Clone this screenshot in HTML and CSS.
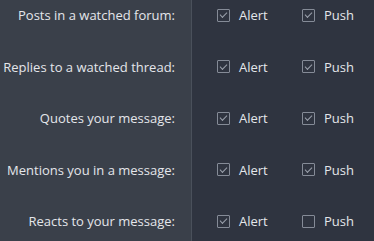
FILE: index.html
```html
<!DOCTYPE html>
<html>
<head>
<meta charset="utf-8">
<link rel="stylesheet" href="styles.css">
</head>
<body>
<div class="panel">
  <div class="labels">
    <div class="label">Posts in a watched forum:</div>
    <div class="label">Replies to a watched thread:</div>
    <div class="label">Quotes your message:</div>
    <div class="label">Mentions you in a message:</div>
    <div class="label">Reacts to your message:</div>
  </div>
  <div class="options">
    <div class="opt-row">
      <span class="opt"><span class="box checked"></span>Alert</span>
      <span class="opt"><span class="box checked"></span>Push</span>
    </div>
    <div class="opt-row">
      <span class="opt"><span class="box checked"></span>Alert</span>
      <span class="opt"><span class="box checked"></span>Push</span>
    </div>
    <div class="opt-row">
      <span class="opt"><span class="box checked"></span>Alert</span>
      <span class="opt"><span class="box checked"></span>Push</span>
    </div>
    <div class="opt-row">
      <span class="opt"><span class="box checked"></span>Alert</span>
      <span class="opt"><span class="box checked"></span>Push</span>
    </div>
    <div class="opt-row">
      <span class="opt"><span class="box checked"></span>Alert</span>
      <span class="opt"><span class="box"></span>Push</span>
    </div>
  </div>
</div>
</body>
</html>
```
FILE: styles.css
```css
html, body {
  margin: 0;
  padding: 0;
  background: #2f3440;
}
body {
  width: 374px;
  height: 241px;
  overflow: hidden;
  font-family: "Open Sans", "Noto Sans", sans-serif;
  font-size: 13px;
  color: #e4e6ea;
}
.panel {
  display: grid;
  grid-template-columns: 192px 1fr;
  height: 241px;
}
.labels {
  background: #3a404a;
  border-right: 1px solid #4a505b;
  display: flex;
  flex-direction: column;
  gap: 31.5px;
  padding: 5px 16px 0 0;
  text-align: right;
}
.label, .opt-row {
  height: 20px;
  line-height: 20px;
  white-space: nowrap;
}
.options {
  display: flex;
  flex-direction: column;
  gap: 31.5px;
  padding: 5px 0 0 25px;
}
.opt-row {
  display: flex;
}
.opt {
  display: flex;
  align-items: center;
  width: 85px;
}
.box {
  width: 11px;
  height: 11px;
  border: 1px solid #858b97;
  border-radius: 1px;
  margin-right: 9px;
  position: relative;
  flex: none;
}
.box.checked::after {
  content: "";
  position: absolute;
  left: 2px;
  top: 1px;
  width: 6px;
  height: 3px;
  border-left: 1.5px solid #9ba1ac;
  border-bottom: 1.5px solid #9ba1ac;
  transform: rotate(-45deg);
  transform-origin: center;
  top: 2.5px;
}
```
